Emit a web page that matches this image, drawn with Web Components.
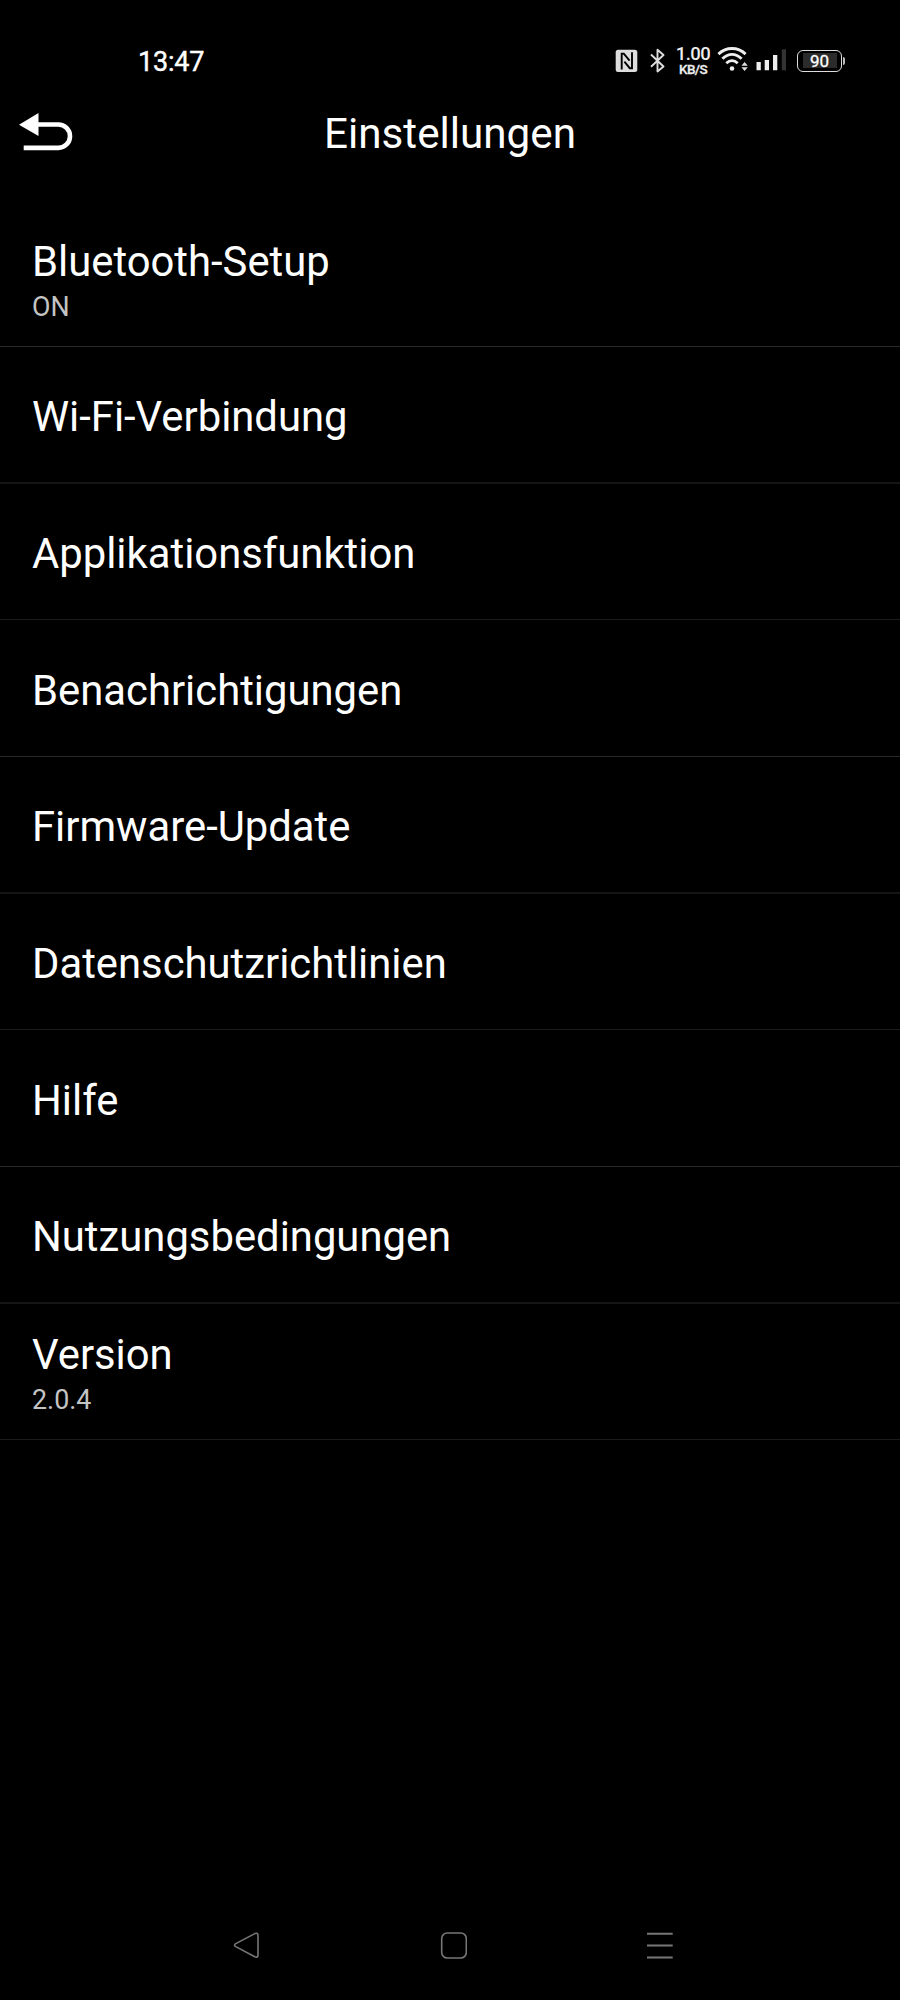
<!DOCTYPE html>
<html lang="de">
<head>
<meta charset="utf-8">
<title>Einstellungen</title>
<style>
html,body{margin:0;background:#000}
body{font-family:Roboto,"Liberation Sans",sans-serif;color:#fff}
</style>
</head>
<body>
<settings-screen></settings-screen>
<script>
const define = (name, html) => customElements.define(name, class extends HTMLElement {
  constructor() {
    super();
    this.attachShadow({mode: 'open'}).innerHTML = html;
  }
});

define('status-bar', `
<style>
:host{display:flex;height:85px;box-sizing:border-box;padding:35px 0 0 138px;align-items:flex-start}
.time{width:477px;font-size:27px;line-height:54px;letter-spacing:-.2px;-webkit-text-stroke:.4px #fff}
svg{display:block;height:50px;flex:none}
.speed{width:36px;padding-top:11px;box-sizing:border-box;display:flex;flex-direction:column;align-items:center;font-weight:500;color:#eee;white-space:nowrap}
.speed div:first-child{font-size:18.5px;line-height:17px;letter-spacing:-.5px}
.speed div:last-child{font-size:13.5px;line-height:12px;letter-spacing:-.6px;-webkit-text-stroke:.3px #eee}
.battery{width:45px;height:22px;box-sizing:border-box;border:1.5px solid #ddd;border-radius:6px;margin:15px 0 0 8px;padding:2px;flex:none}
.battery div{background:#2b2b2b;width:34px;height:15px;font-size:17px;line-height:16px;text-align:center;-webkit-text-stroke:.3px #fff;margin:0 auto}
.tip{width:2px;height:8px;background:#bbb;margin:22px 0 0 1px;border-radius:0 2px 2px 0}
</style>
<div class="time">13:47</div>
<svg width="60" viewBox="615 35 60 50">
 <rect x="615.7" y="49.7" width="21.6" height="22.3" rx="2.5" fill="#ddd"/>
 <path d="M621.7 69.5V53.6H623.8L629.6 60.6M632 52.2V68.2H629.8L624.4 61.6" fill="none" stroke="#000" stroke-width="1.9"/>
 <path d="M651 54.5L663.5 66.5L657.5 71.5V49.7L663.5 55L651 66.8" fill="none" stroke="#ddd" stroke-width="1.9" stroke-linejoin="round"/>
</svg>
<div class="speed"><div>1.00</div><div>KB/S</div></div>
<svg width="78" viewBox="711 35 78 50">
 <g fill="none" stroke="#eee" stroke-width="2.9">
  <path d="M718.4 54.1C726.4 46.7 737.6 46.7 745.6 54.1"/>
  <path d="M722.4 58.7C728.4 53 735.6 53 741.6 58.7"/>
  <path d="M726.3 63.2C729.8 59.9 734.2 59.9 737.7 63.2"/>
 </g>
 <circle cx="732" cy="68.5" r="2.3" fill="#eee"/>
 <path d="M741.4 65.7L744.6 62L747.8 65.7ZM741.4 67.3L744.6 71L747.8 67.3Z" fill="#ddd"/>
 <path d="M756.5 62H760.8V70.3H756.5ZM764.7 60H769V70.3H764.7ZM773 55H777.3V70.3H773Z" fill="#eee"/>
 <path d="M781.8 49.3H786V70.3H781.8Z" fill="#333"/>
</svg>
<div class="battery"><div>90</div></div><div class="tip"></div>`);

define('title-bar', `
<style>
:host{display:grid;grid-template-columns:80px 1fr 80px;height:98px}
svg{display:block}
h1{margin:0;font-weight:400;font-size:42.2px;line-height:98px;text-align:center}
</style>
<svg width="80" height="98" viewBox="0 85 80 98">
 <path d="M19 124.7L38.5 113V136Z" fill="#fff"/>
 <path d="M37 124.5H58.3A11.7 11.7 0 0 1 58.3 147.9H23.7" fill="none" stroke="#fff" stroke-width="4.6"/>
</svg>
<h1><slot></slot></h1>`);

define('setting-row', `
<style>
:host{display:flex;flex-direction:column;justify-content:center;box-sizing:border-box;height:var(--h,137px);padding:0 0 0 32px;border-bottom:var(--bw,1px) solid var(--line,#1b1b1b)}
.name{font-size:41.8px;line-height:50px;padding-top:var(--shift,5px)}
::slotted([slot=detail]){display:block;font-size:26.8px;line-height:36px;color:#c4c4c4;padding-top:2px;margin-bottom:0}
</style>
<div class="name"><slot></slot></div><slot name="detail"></slot>`);

define('nav-bar', `
<style>
:host{display:flex;height:110px;align-items:center;padding-left:233px;gap:178px}
svg{display:block;fill:none;stroke:#777;stroke-width:1.6}
</style>
<svg width="28" height="28" viewBox="233 1931 28 28"><path d="M235.3 1943.9L254.8 1933.6Q258 1932.5 258 1935.6V1955Q258 1958 254.8 1956.8L235.3 1946.4Q233.8 1945.2 235.3 1943.9Z" stroke-linejoin="round"/></svg>
<svg width="28" height="28" viewBox="439 1931 28 28"><rect x="441.7" y="1933" width="24.6" height="25" rx="5.5"/></svg>
<svg width="28" height="28" viewBox="645 1931 28 28"><path d="M647 1933.7H672.7M647 1945.6H672.7M647 1957.4H672.7" stroke-width="2"/></svg>`);

define('settings-screen', `
<style>
:host{display:flex;flex-direction:column;width:900px;height:2000px;background:#000;overflow:hidden}
main{flex:1;padding-top:27px}
.a{--line:#292929}
.b{--line:#151515;--bw:2px}
.s{--h:136px}
.s:not(:last-child){--shift:4px}
.first{--shift:6px}
</style>
<status-bar></status-bar>
<title-bar>Einstellungen</title-bar>
<main>
<setting-row class="a first">Bluetooth-Setup<span slot="detail">ON</span></setting-row>
<setting-row class="b">Wi-Fi-Verbindung</setting-row>
<setting-row class="s">Applikationsfunktion</setting-row>
<setting-row class="a">Benachrichtigungen</setting-row>
<setting-row class="b">Firmware-Update</setting-row>
<setting-row class="s">Datenschutzrichtlinien</setting-row>
<setting-row class="a">Hilfe</setting-row>
<setting-row class="b">Nutzungsbedingungen</setting-row>
<setting-row class="s">Version<span slot="detail">2.0.4</span></setting-row>
</main>
<nav-bar></nav-bar>`);
</script>
</body>
</html>
